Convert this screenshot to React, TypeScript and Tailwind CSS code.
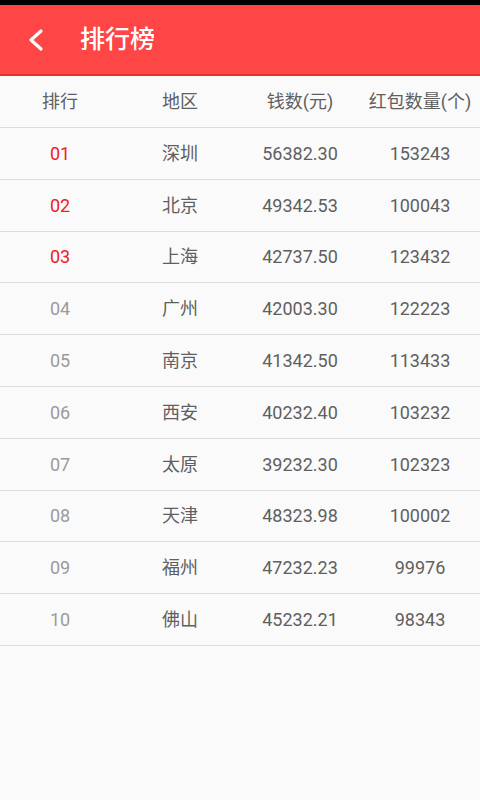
const rows = [
  { rank: "01", city: "深圳", money: "56382.30", count: "153243" },
  { rank: "02", city: "北京", money: "49342.53", count: "100043" },
  { rank: "03", city: "上海", money: "42737.50", count: "123432" },
  { rank: "04", city: "广州", money: "42003.30", count: "122223" },
  { rank: "05", city: "南京", money: "41342.50", count: "113433" },
  { rank: "06", city: "西安", money: "40232.40", count: "103232" },
  { rank: "07", city: "太原", money: "39232.30", count: "102323" },
  { rank: "08", city: "天津", money: "48323.98", count: "100002" },
  { rank: "09", city: "福州", money: "47232.23", count: "99976" },
  { rank: "10", city: "佛山", money: "45232.21", count: "98343" },
];

const font = "font-['Roboto','Noto_Sans_CJK_SC',sans-serif]";

export default function App() {
  return (
    <div className={`w-[480px] h-[800px] bg-[#fafafa] flex flex-col ${font}`}>
      <div className="h-[5px] bg-black" />
      <div className="h-[71px] bg-[#fe4646] border-b-[2px] border-[#e8302f] flex items-center">
        {/* back arrow */}
        <svg width="18" height="24" viewBox="0 0 18 24" className="ml-[27px] mt-[1px]">
          <polyline
            points="14,3 4,12 14,21"
            fill="none"
            stroke="white"
            strokeWidth="3.2"
            strokeLinecap="round"
            strokeLinejoin="round"
          />
        </svg>
        <h1 className="ml-[35px] text-[25px] font-medium text-white leading-none">排行榜</h1>
      </div>

      <div className="grid grid-cols-4 h-[52px] shrink-0 items-center border-b border-[#dedede] text-[18px] text-[#5f5f5f] text-center">
        <span>排行</span>
        <span>地区</span>
        <span>钱数(元)</span>
        <span>红包数量(个)</span>
      </div>

      {rows.map((r, i) => (
        <div
          key={r.rank}
          className="grid grid-cols-4 h-[51.8px] shrink-0 items-center border-b border-[#dedede] text-[18px] text-[#5f5f5f] text-center"
        >
          <span className={i < 3 ? "text-[#f02020]" : "text-[#9a9a9a]"}>{r.rank}</span>
          <span>{r.city}</span>
          <span>{r.money}</span>
          <span>{r.count}</span>
        </div>
      ))}
    </div>
  );
}
